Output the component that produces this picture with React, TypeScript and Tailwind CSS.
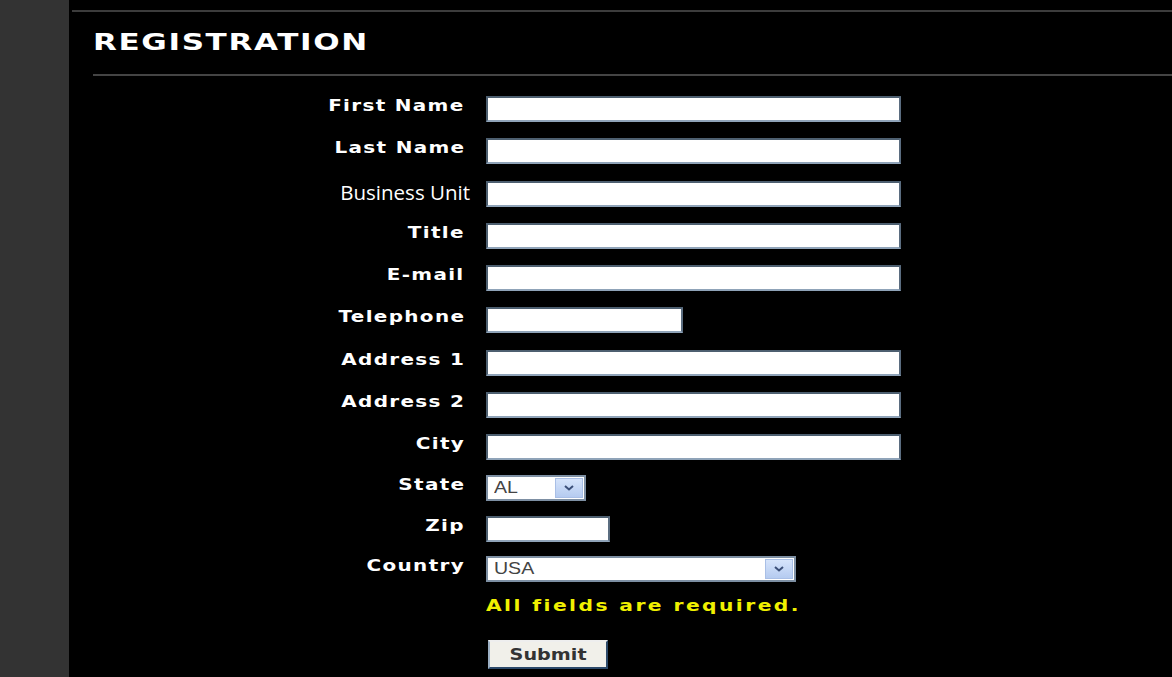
import React from 'react';

// old page used a wide bold face; DejaVu stretched horizontally gets close
const labelCls =
  "block origin-right scale-x-[1.33] text-white font-bold text-[15px] tracking-[1px] leading-[18px] [font-family:'DejaVu_Sans',sans-serif]";

const inputCls =
  "h-[26px] bg-white border-2 border-t-[#4d5f70] border-l-[#4d5f70] border-r-[#5b6d80] border-b-[#8fa3b8] outline-none";

const ChevronBox = ({ w }: { w: string }) => (
  <span className={`flex items-center justify-center h-[20px] ${w} bg-gradient-to-b from-[#d6e4fb] to-[#b5cbf0] border border-[#a9bfe6]`}>
    <svg width="12" height="8" viewBox="0 0 12 8">
      <path d="M2 2l4 3.5L10 2" stroke="#3b4f78" strokeWidth="2" fill="none" />
    </svg>
  </span>
);

const Select = ({ value, width }: { value: string; width: string }) => (
  <div className={`${width} h-[26px] bg-white border-2 border-[#7d8fa3] flex items-center justify-between pl-[6px] pr-[1px]`}>
    <span className="inline-block origin-left scale-x-[1.15] text-[17px] text-[#444] [font-family:'Liberation_Sans',sans-serif]">{value}</span>
    <ChevronBox w="w-[28px]" />
  </div>
);

const Row = ({ label, children, plain }: { label: string; children: React.ReactNode; plain?: boolean }) => (
  <div className="flex items-start gap-[21px] h-[26px]">
    {plain ? (
      <div className="w-[377px] -mr-[5px] shrink-0 text-right text-white text-[20.5px] leading-[24px] -mt-[1px] [font-family:'Open_Sans',sans-serif]">
        {label}
      </div>
    ) : (
      <div className="w-[372px] shrink-0 flex justify-end pt-[1px]">
        <span className={labelCls}>{label}</span>
      </div>
    )}
    {children}
  </div>
);

export default function App() {
  const full = "w-[415px]";
  return (
    <div className="flex w-[1172px] h-[677px] overflow-hidden bg-black">
      <div className="w-[69px] shrink-0 bg-[#333333]" />
      <div className="flex-1 pt-[10px] pl-[3px]">
        <div className="border-t-2 border-[#3c3c3c]">
          <div className="ml-[21px]">
            <h1 className="pt-[17px] pb-[19px] text-white font-bold text-[23px] leading-[26px] [font-family:'DejaVu_Sans',sans-serif]">
              <span className="inline-block origin-left scale-x-[1.35] tracking-[1.2px]">REGISTRATION</span>
            </h1>
            <div className="border-t-2 border-[#444]" />
            <div className="flex flex-col gap-[16.25px] pt-[20px]">
              <Row label="First Name"><div className={`${inputCls} ${full}`} /></Row>
              <Row label="Last Name"><div className={`${inputCls} ${full}`} /></Row>
              <Row label="Business Unit" plain><div className={`${inputCls} ${full}`} /></Row>
              <Row label="Title"><div className={`${inputCls} ${full}`} /></Row>
              <Row label="E-mail"><div className={`${inputCls} ${full}`} /></Row>
              <Row label="Telephone"><div className={`${inputCls} w-[197px]`} /></Row>
              <Row label="Address 1"><div className={`${inputCls} ${full}`} /></Row>
              <Row label="Address 2"><div className={`${inputCls} ${full}`} /></Row>
              <Row label="City"><div className={`${inputCls} ${full}`} /></Row>
            </div>
            <div className="flex flex-col gap-[14.5px] pt-[15px]">
              <Row label="State"><Select value="AL" width="w-[100px]" /></Row>
              <Row label="Zip"><div className={`${inputCls} w-[124px]`} /></Row>
              <Row label="Country"><Select value="USA" width="w-[310px]" /></Row>
            </div>
            <div className="pl-[393px]">
              <p className="pt-[14px] text-[#f0f000] font-bold text-[15px] leading-[20px] [font-family:'DejaVu_Sans',sans-serif]">
                <span className="inline-block origin-left scale-x-[1.35] tracking-[1.8px]">All fields are required.</span>
              </p>
              <button className="mt-[24px] ml-[2px] w-[120px] h-[29px] bg-[#f1f0ea] border-2 border-t-[#eee] border-l-[#9db0c4] border-r-[#2d4a6a] border-b-[#2d4a6a] text-[#333] text-[16px] leading-[20px] font-bold [font-family:'DejaVu_Sans',sans-serif]">
                <span className="inline-block scale-x-[1.2]">Submit</span>
              </button>
            </div>
          </div>
        </div>
      </div>
    </div>
  );
}
